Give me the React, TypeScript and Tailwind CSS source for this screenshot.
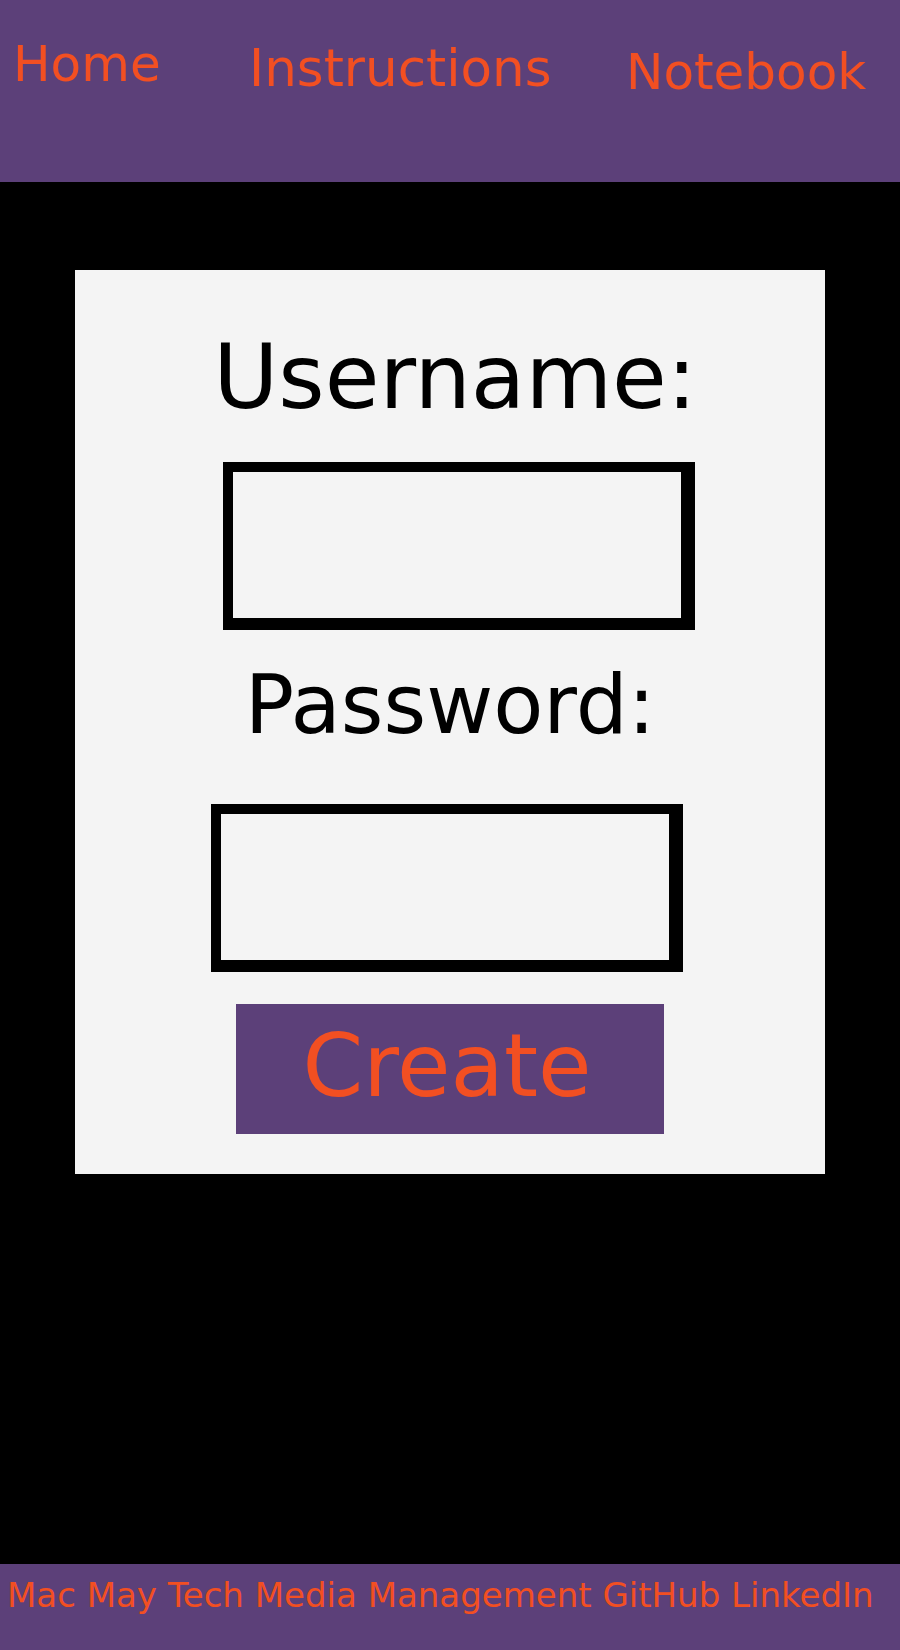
import React from "react";

const navItems = [
  { label: "Home", box: "w-[236px] pt-[35px]", text: "text-[50px] leading-[58px]" },
  { label: "Instructions", box: "w-[377px] pt-[38px]", text: "text-[51.5px] leading-[60px]" },
  { label: "Notebook", box: "pt-[43px]", text: "text-[50px] leading-[58px]" },
];

const Header = () => (
  <header className="h-[182px] bg-[#5c4079] flex items-start pl-[13px]">
    {navItems.map((item) => (
      <div key={item.label} className={item.box}>
        <a href="#" className={`${item.text} block text-[#f24f22] whitespace-nowrap`}>
          {item.label}
        </a>
      </div>
    ))}
  </header>
);

const SignupCard = () => (
  <div className="w-[750px] bg-[#f4f4f4] flex flex-col items-center pt-[55px] pb-[40px]">
    <h2 className="text-[89px] leading-[105px] text-black ml-[10px]">Username:</h2>
    <input
      type="text"
      className="mt-[32px] ml-[18px] w-[472px] h-[168px] bg-transparent border-black border-t-[10px] border-l-[10px] border-r-[14px] border-b-[12px] outline-none"
    />
    <h2 className="mt-[27px] text-[82px] leading-[95px] text-black">Password:</h2>
    <input
      type="password"
      className="mt-[52px] mr-[6px] w-[472px] h-[168px] bg-transparent border-black border-t-[10px] border-l-[10px] border-r-[14px] border-b-[12px] outline-none"
    />
    <button className="mt-[32px] w-[428px] h-[130px] bg-[#5c4079] text-[#f24f22] text-[87px] leading-[101px] flex justify-center items-start pt-[12px] pr-[6px]">
      Create
    </button>
  </div>
);

const Footer = () => (
  <footer className="h-[86px] bg-[#5c4079] pl-[7px] pt-[11px]">
    <p className="text-[34px] leading-[40px] text-[#f24f22] whitespace-nowrap">
      Mac May Tech Media Management GitHub LinkedIn
    </p>
  </footer>
);

export default function App() {
  return (
    <div
      className="h-[1650px] flex flex-col bg-black"
      style={{ fontFamily: '"DejaVu Sans", Verdana, sans-serif' }}
    >
      <Header />
      <main className="flex-1 flex justify-center items-start pt-[88px]">
        <SignupCard />
      </main>
      <Footer />
    </div>
  );
}
